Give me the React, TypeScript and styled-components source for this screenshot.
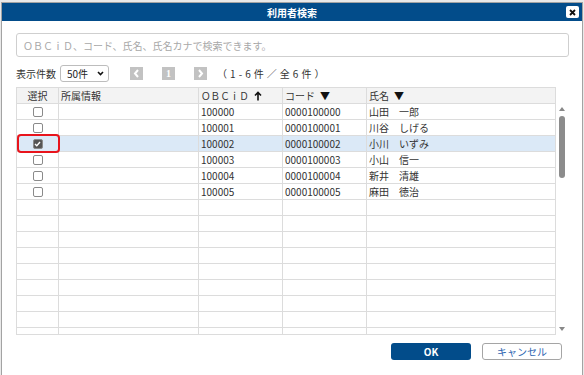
import React from "react";
import styled, { createGlobalStyle } from "styled-components";

const Global = createGlobalStyle`
  html, body { margin: 0; padding: 0; background: #e9e9e9; }
  body { font-family: "Noto Sans CJK JP", "Noto Sans", sans-serif; font-size: 10px; color: #333; }
  * { box-sizing: border-box; }
`;

const Page = styled.div`
  width: 584px;
  height: 375px;
  padding: 2px 1px 0 1px;
`;

const Dialog = styled.div`
  width: 582px;
  height: 373px;
  border: 1px solid #a3a3a3;
  border-bottom: none;
  background: #fff;
  display: flex;
  flex-direction: column;
`;

const TitleBar = styled.div`
  height: 18px;
  background: #024c8a;
  color: #fff;
  font-weight: bold;
  font-size: 10px;
  display: flex;
  align-items: center;
  justify-content: center;
  position: relative;
`;

const CloseBtn = styled.div`
  position: absolute;
  right: 3px;
  top: 3px;
  width: 13px;
  height: 12px;
  background: #fff;
  border-radius: 2px;
  display: flex;
  align-items: center;
  justify-content: center;
`;

const Body = styled.div`
  flex: 1;
  display: flex;
  flex-direction: column;
  padding: 12px 13px 0 14px;
`;

const Search = styled.div`
  height: 24px;
  border: 1px solid #cfcfcf;
  border-radius: 3px;
  display: flex;
  align-items: center;
  padding-left: 6px;
  color: #a8a8a8;
  font-size: 10px;
`;

const Toolbar = styled.div`
  margin-top: 8px;
  height: 17px;
  display: flex;
  align-items: center;
`;

const Label = styled.span`
  color: #333;
  margin-right: 4px;
`;

const Select = styled.div`
  width: 49px;
  height: 17px;
  border: 1px solid #bdbdbd;
  border-radius: 3px;
  display: flex;
  align-items: center;
  justify-content: space-between;
  padding: 0 4px 0 6px;
  color: #222;
`;

const PagerBtn = styled.div<{ $ml: number }>`
  margin-left: ${(p) => p.$ml}px;
  width: 13px;
  height: 13px;
  background: #c2c2c2;
  color: #fff;
  display: flex;
  align-items: center;
  justify-content: center;
  font-size: 10px;
  font-family: "Liberation Serif", serif;
  font-weight: bold;
`;

const PagerText = styled.span`
  margin-left: 10px;
  color: #333;
  letter-spacing: 0.4px;
`;

const TableArea = styled.div`
  margin-top: 5px;
  display: flex;
  height: 248px;
`;

const Table = styled.div`
  width: 540px;
  height: 248px;
  overflow: hidden;
  border-left: 1px solid #dcdcdc;
  border-right: 1px solid #dcdcdc;
  border-bottom: 1px solid #dcdcdc;
  position: relative;
`;

const Row = styled.div<{ $head?: boolean; $sel?: boolean }>`
  display: grid;
  grid-template-columns: 42px 140px 84px 84px 1fr;
  height: 16px;
  background: ${(p) => (p.$head ? "#f3f3f3" : p.$sel ? "#dbe9f7" : "#fff")};
  border-top: 1px solid #dcdcdc;
`;

const Cell = styled.div<{ $center?: boolean }>`
  border-right: 1px solid #dcdcdc;
  display: flex;
  align-items: center;
  justify-content: ${(p) => (p.$center ? "center" : "flex-start")};
  padding-left: ${(p) => (p.$center ? 0 : 2)}px;
  white-space: nowrap;
  overflow: hidden;
  color: #333;
  &:last-child { border-right: none; }
`;

const Wide = styled.span`
  font-size: 9.6px;
`;

const Arrow = styled.span`
  margin-left: 5px;
  font-size: 10px;
  color: #111;
  display: flex;
  align-items: center;
`;

const Check = styled.div<{ $on?: boolean }>`
  width: 10px;
  height: 10px;
  border: 1px solid #8a8a8a;
  border-radius: 2px;
  background: ${(p) => (p.$on ? "#555" : "#fff")};
  display: flex;
  align-items: center;
  justify-content: center;
`;

const Highlight = styled.div`
  position: absolute;
  left: 0px;
  top: 47px;
  width: 43px;
  height: 19px;
  border: 2.5px solid #e8141c;
  border-radius: 4px;
`;

const ScrollBar = styled.div`
  width: 10px;
  margin-left: 1px;
  display: flex;
  flex-direction: column;
  align-items: center;
  padding-top: 20px;
`;

const ArrowUp = styled.div`
  width: 0;
  height: 0;
  border-left: 3px solid transparent;
  border-right: 3px solid transparent;
  border-bottom: 4px solid #888;
`;

const ArrowDown = styled.div`
  width: 0;
  height: 0;
  border-left: 3px solid transparent;
  border-right: 3px solid transparent;
  border-top: 4px solid #888;
  margin-top: auto;
  margin-bottom: 4px;
`;

const Thumb = styled.div`
  margin-top: 5px;
  width: 6px;
  height: 62px;
  background: #8c8c8c;
  border-radius: 3px;
`;

const Footer = styled.div`
  margin-top: 8px;
  display: flex;
  justify-content: flex-end;
  padding-right: 7px;
  gap: 11px;
`;

const Button = styled.div<{ $primary?: boolean }>`
  width: 80px;
  height: 17px;
  border-radius: 3px;
  display: flex;
  align-items: center;
  justify-content: center;
  font-size: 10px;
  background: ${(p) => (p.$primary ? "#024c8a" : "#fff")};
  color: ${(p) => (p.$primary ? "#fff" : "#2b64b0")};
  font-weight: ${(p) => (p.$primary ? "bold" : "normal")};
  border: ${(p) => (p.$primary ? "none" : "1px solid #a5a5a5")};
`;

const rows = [
  { id: "100000", code: "0000100000", name: "山田　一郎" },
  { id: "100001", code: "0000100001", name: "川谷　しげる" },
  { id: "100002", code: "0000100002", name: "小川　いずみ", sel: true },
  { id: "100003", code: "0000100003", name: "小山　信一" },
  { id: "100004", code: "0000100004", name: "新井　清雄" },
  { id: "100005", code: "0000100005", name: "麻田　徳治" },
];

const emptyRows = Array.from({ length: 9 });

export default function App() {
  return (
    <Page>
      <Global />
      <Dialog>
        <TitleBar>
          利用者検索
          <CloseBtn>
            <svg width="7" height="7" viewBox="0 0 7 7">
              <path d="M1 1L6 6M6 1L1 6" stroke="#111" strokeWidth="1.8" />
            </svg>
          </CloseBtn>
        </TitleBar>
        <Body>
          <Search>ＯＢＣｉＤ、コード、氏名、氏名カナで検索できます。</Search>
          <Toolbar>
            <Label>表示件数</Label>
            <Select>
              <span>50件</span>
              <svg width="7" height="5" viewBox="0 0 7 5">
                <path d="M1 1L3.5 3.5L6 1" stroke="#111" strokeWidth="1.6" fill="none" />
              </svg>
            </Select>
            <PagerBtn $ml={21}>
              <svg width="7" height="9" viewBox="0 0 7 9">
                <path d="M5 1L2 4.5L5 8" stroke="#fff" strokeWidth="2" fill="none" />
              </svg>
            </PagerBtn>
            <PagerBtn $ml={19}>1</PagerBtn>
            <PagerBtn $ml={19}>
              <svg width="7" height="9" viewBox="0 0 7 9">
                <path d="M2 1L5 4.5L2 8" stroke="#fff" strokeWidth="2" fill="none" />
              </svg>
            </PagerBtn>
            <PagerText>（ 1 - 6 件 ／ 全 6 件 ）</PagerText>
          </Toolbar>
          <TableArea>
            <Table>
              <Row $head>
                <Cell $center>選択</Cell>
                <Cell>所属情報</Cell>
                <Cell>
                  <Wide>ＯＢＣｉＤ</Wide>
                  <Arrow>
                    <svg width="8" height="10" viewBox="0 0 8 10">
                      <path d="M4 9.5V1.5M1 4.5L4 1.5L7 4.5" stroke="#111" strokeWidth="1.6" fill="none" />
                    </svg>
                  </Arrow>
                </Cell>
                <Cell>
                  コード<Arrow>▼</Arrow>
                </Cell>
                <Cell>
                  氏名<Arrow>▼</Arrow>
                </Cell>
              </Row>
              {rows.map((r) => (
                <Row key={r.id} $sel={r.sel}>
                  <Cell $center>
                    <Check $on={r.sel}>
                      {r.sel && (
                        <svg width="7" height="6" viewBox="0 0 7 6">
                          <path d="M1 3L2.8 4.8L6 1" stroke="#fff" strokeWidth="1.4" fill="none" />
                        </svg>
                      )}
                    </Check>
                  </Cell>
                  <Cell />
                  <Cell>{r.id}</Cell>
                  <Cell>{r.code}</Cell>
                  <Cell>{r.name}</Cell>
                </Row>
              ))}
              {emptyRows.map((_, i) => (
                <Row key={"e" + i}>
                  <Cell />
                  <Cell />
                  <Cell />
                  <Cell />
                  <Cell />
                </Row>
              ))}
              <Highlight />
            </Table>
            <ScrollBar>
              <ArrowUp />
              <Thumb />
              <ArrowDown />
            </ScrollBar>
          </TableArea>
          <Footer>
            <Button $primary>OK</Button>
            <Button>キャンセル</Button>
          </Footer>
        </Body>
      </Dialog>
    </Page>
  );
}
